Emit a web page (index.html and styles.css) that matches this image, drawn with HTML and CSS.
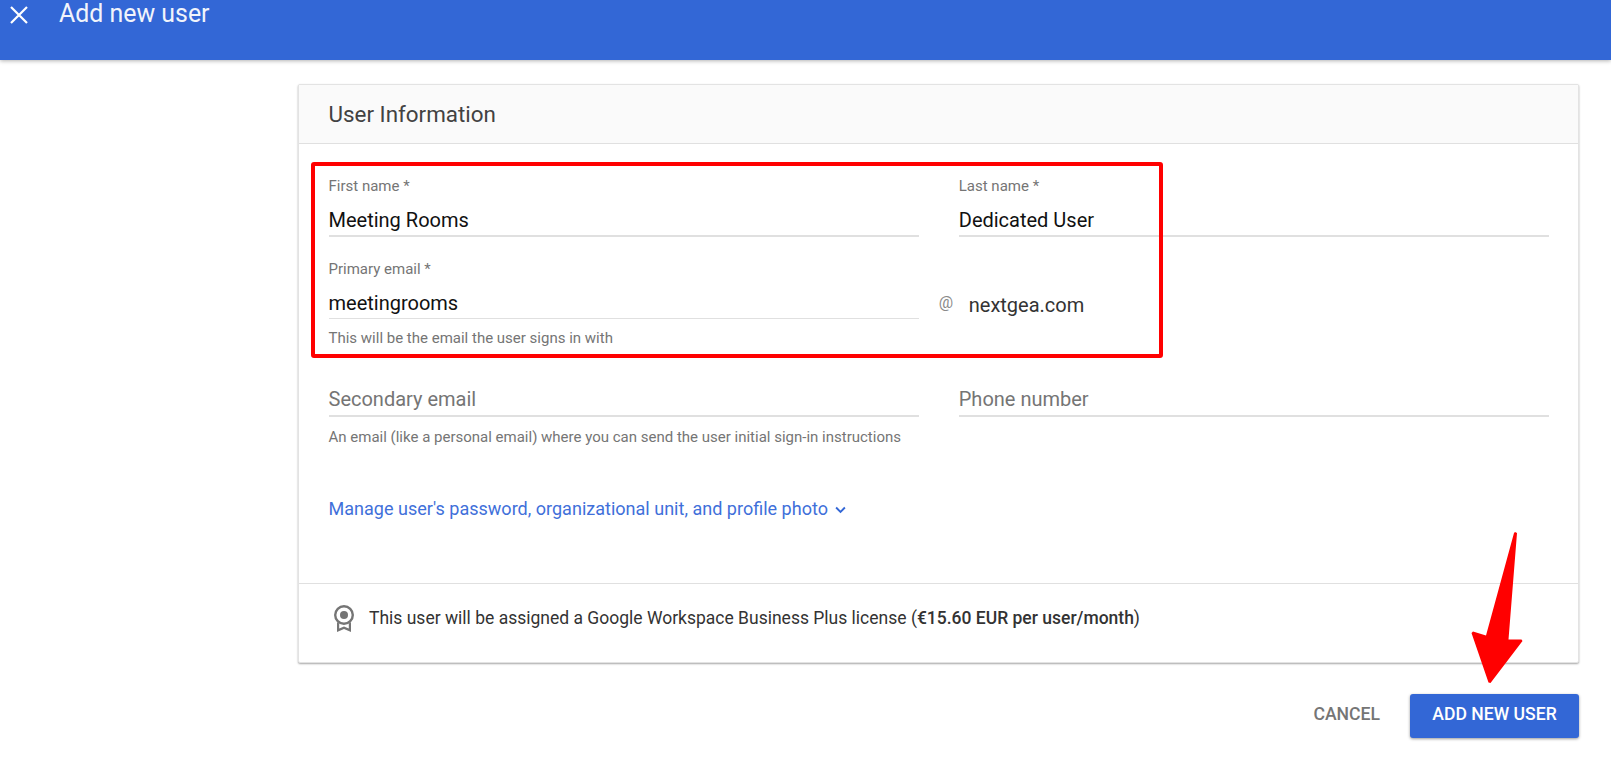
FILE: index.html
```html
<!DOCTYPE html>
<html lang="en">
<head>
<meta charset="utf-8">
<title>Add new user</title>
<link rel="stylesheet" href="styles.css">
</head>
<body>
<div class="page">
  <header class="topbar">
    <svg class="close" viewBox="0 0 18 18" width="18" height="18"><path d="M1 1 L17 17 M17 1 L1 17"/></svg>
    <h1 class="title">Add new user</h1>
  </header>
  <main class="main">
    <section class="card">
      <div class="card-head">User Information</div>
      <div class="form">
        <div class="row row-first">
          <div class="field">
            <div class="label">First name *</div>
            <div class="value">Meeting Rooms</div>
          </div>
          <div class="field">
            <div class="label">Last name *</div>
            <div class="value">Dedicated User</div>
          </div>
        </div>
        <div class="row row-email">
          <div class="field">
            <div class="label">Primary email *</div>
            <div class="value thin">meetingrooms</div>
            <div class="hint">This will be the email the user signs in with</div>
          </div>
          <div class="domain">
            <span class="at">@</span>
            <span class="domain-name">nextgea.com</span>
          </div>
        </div>
        <div class="row row-secondary">
          <div class="field">
            <div class="value placeholder">Secondary email</div>
            <div class="hint">An email (like a personal email) where you can send the user initial sign-in instructions</div>
          </div>
          <div class="field">
            <div class="value placeholder">Phone number</div>
          </div>
        </div>
        <div class="manage">
          <span>Manage user's password, organizational unit, and profile photo</span>
          <svg class="chev" viewBox="0 0 10 7" width="11" height="8"><path d="M1 1.2 L5 5.2 L9 1.2"/></svg>
        </div>
      </div>
      <div class="license">
        <svg class="badge" viewBox="0 0 22 28" width="22" height="28">
          <circle class="ring" cx="11" cy="10" r="8.8"/>
          <circle class="dot" cx="11" cy="10" r="4"/>
          <path class="ribbon" d="M4 17 V27 L11 24 L18 27 V17 L15.8 18.6 V23.4 L11 21.4 L6.2 23.4 V18.6 Z"/>
        </svg>
        <p class="license-text">This user will be assigned a Google Workspace Business Plus license (<b>€15.60 EUR per user/month</b>)</p>
      </div>
    </section>
    <div class="actions">
      <span class="cancel">CANCEL</span>
      <span class="add">ADD NEW USER</span>
    </div>
  </main>
  <div class="redbox"></div>
  <svg class="arrow" viewBox="0 0 60 160" width="60" height="160">
    <path d="M45 2 L47 3 L38.5 109.5 L51.5 109.5 L52.5 111 L20.5 153 L18.5 152.5 L1.5 103 L3 101.5 L16 105.5 L44 3 Z"/>
  </svg>
</div>
</body>
</html>
```
FILE: styles.css
```css
* { box-sizing: border-box; }
html, body { margin: 0; padding: 0; height: 100%; overflow: hidden; background: #fff; }
body { font-family: Roboto, "Liberation Sans", sans-serif; color: #212121; }
.page { position: relative; width: 1611px; height: 771px; overflow: hidden; }

.topbar {
  height: 60px;
  background: #3367d6;
  box-shadow: 0 1px 4px rgba(0,0,0,.3);
  display: flex;
  align-items: flex-start;
  padding-left: 10px;
  color: #fff;
}
.close { margin-top: 6px; fill: none; stroke: #fff; stroke-width: 2.2; }
.title { margin: 0 0 0 31px; font-size: 24.9px; line-height: 27px; font-weight: 400; color: #f1f4fb; }

.main { padding: 24px 32px 0 298px; }
.card {
  height: 579px;
  background: #fff;
  border: 1px solid #e3e3e3;
  border-radius: 2px;
  box-shadow: 0 1px 2px rgba(0,0,0,.35);
  display: flex;
  flex-direction: column;
}
.card-head {
  height: 59px;
  padding-left: 29.5px;
  background: #fafafa;
  border-bottom: 1px solid #e0e0e0;
  font-size: 22.4px;
  line-height: 58px;
  color: #424242;
}
.form { flex: 1; padding: 34px 29px 0 29.5px; }
.row { display: flex; gap: 40px; }
.field { flex: 1 1 0; min-width: 0; }
.label { font-size: 15px; line-height: 16px; color: #757575; }
.value {
  margin-top: 9px;
  height: 34px;
  font-size: 20px;
  line-height: 34px;
  color: #111;
  border-bottom: 2px solid #e0e0e0;
}
.value.thin { margin-top: 9px; height: 33px; border-bottom-width: 1px; }
.value.placeholder { margin-top: 0; height: 35px; color: #757575; }
.row-email { margin-top: 24px; }
.hint { margin-top: 11px; font-size: 15px; line-height: 16px; color: #757575; }
.row-secondary { margin-top: 36px; }
.row-secondary .hint { margin-top: 12px; }

.domain { flex: 1 1 0; min-width: 0; display: flex; align-items: flex-start; padding-top: 27px; }
.at { margin-left: -20px; width: 30px; font-size: 16px; line-height: 30px; color: #8a8a8a; }
.domain-name { font-size: 20px; line-height: 34px; color: #333; }

.manage { margin-top: 52px; display: flex; align-items: center; gap: 7px; font-size: 18.04px; line-height: 24px; color: #3f70da; }
.chev { fill: none; stroke: #3367d6; stroke-width: 1.7; margin-top: 2px; }

.license {
  height: 79px;
  border-top: 1px solid #e0e0e0;
  display: flex;
  align-items: flex-start;
  padding: 21px 0 0 34px;
}
.badge { flex: none; }
.ring { fill: none; stroke: #757575; stroke-width: 2.4; }
.dot { fill: #757575; }
.ribbon { fill: #757575; }
.license-text { margin: -1px 0 0 14px; font-size: 17.5px; line-height: 28px; color: #333; }
.license-text b { font-weight: 500; }

.actions { display: flex; justify-content: flex-end; align-items: center; margin-top: 31px; gap: 30px; }
.cancel { margin-top: -4px; font-size: 17.6px; font-weight: 500; color: #757575; }
.add {
  width: 169px;
  height: 44px;
  line-height: 41px;
  text-align: center;
  background: #3367d6;
  color: #fff;
  font-size: 17.6px;
  font-weight: 500;
  border-radius: 3px;
  box-shadow: 0 1px 3px rgba(0,0,0,.4);
}

.redbox {
  position: absolute;
  left: 311px;
  top: 162px;
  width: 852px;
  height: 196px;
  border: 4px solid #ff0000;
  border-radius: 3px;
}
.arrow { position: absolute; left: 1470px; top: 530px; overflow: visible; fill: #ff0000; }
```
